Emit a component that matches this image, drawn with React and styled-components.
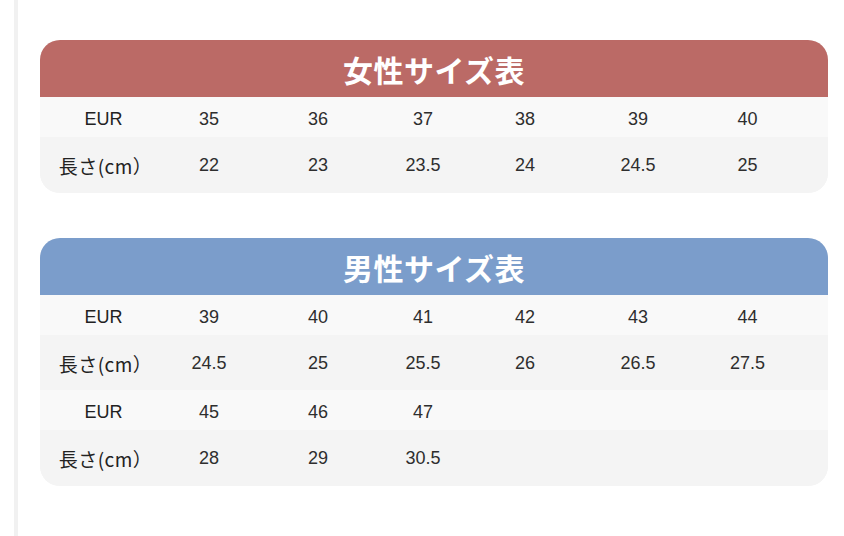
import styled, { createGlobalStyle } from "styled-components";

const GlobalStyle = createGlobalStyle`
    body {
        margin: 0;
        background: #ffffff;
        font-family: "Liberation Sans", "Noto Sans CJK JP", sans-serif;
    }
`;

// column widths measured from the reference, label column first
const COLS = "127px 84px 134px 76px 128px 98px 121px 1fr";

const Page = styled.div`
    margin-left: 14px;
    border-left: 4px solid #f1f1f1;
    min-height: 536px;
    box-sizing: border-box;
    padding: 40px 16px 0 22px;
    display: flex;
    flex-direction: column;
    gap: 45px;
`;

const Card = styled.div`
    width: 788px;
    border-radius: 20px;
    overflow: hidden;
    background: #f4f4f4;
    padding-bottom: 1px;
`;

const Header = styled.div`
    height: 57px;
    display: flex;
    align-items: center;
    justify-content: center;
    background: ${(props) => props.color};
    color: #ffffff;
    font-family: "Noto Sans CJK JP", sans-serif;
    font-weight: 700;
    font-size: 30px;
    letter-spacing: 0.5px;
`;

const Row = styled.div`
    display: grid;
    grid-template-columns: ${COLS};
    align-items: center;
    height: ${(props) => (props.kind === "eur" ? "40px" : "55px")};
    box-sizing: border-box;
    padding-top: ${(props) => (props.kind === "eur" ? "4px" : "2px")};
    background: ${(props) => (props.kind === "eur" ? "#f9f9f9" : "#f4f4f4")};
`;

const Cell = styled.div`
    text-align: center;
    font-size: 18px;
    color: #2e2e2e;
    white-space: nowrap;
`;

const Label = styled(Cell)`
    color: #222222;
    font-family: ${(props) => (props.cjk ? '"Noto Sans CJK JP", sans-serif' : "inherit")};
    font-size: ${(props) => (props.cjk ? "19px" : "18px")};
    letter-spacing: ${(props) => (props.cjk ? "0.5px" : "0")};
    padding-left: ${(props) => (props.cjk ? "4px" : "0")};
`;

const women = [
    { eur: ["35", "36", "37", "38", "39", "40"], len: ["22", "23", "23.5", "24", "24.5", "25"] },
];

const men = [
    { eur: ["39", "40", "41", "42", "43", "44"], len: ["24.5", "25", "25.5", "26", "26.5", "27.5"] },
    { eur: ["45", "46", "47"], len: ["28", "29", "30.5"] },
];

const SizeTable = ({ title, color, groups }) => (
    <Card>
        <Header color={color}>{title}</Header>
        {groups.map((g, i) => (
            <div key={i}>
                <Row kind="eur">
                    <Label>EUR</Label>
                    {g.eur.map((v) => (
                        <Cell key={v}>{v}</Cell>
                    ))}
                </Row>
                <Row kind="len">
                    <Label cjk>長さ(cm）</Label>
                    {g.len.map((v) => (
                        <Cell key={v}>{v}</Cell>
                    ))}
                </Row>
            </div>
        ))}
    </Card>
);

const App = () => {
    return (
        <>
            <GlobalStyle />
            <Page>
                <SizeTable title="女性サイズ表" color="#bb6a66" groups={women} />
                <SizeTable title="男性サイズ表" color="#7b9dcb" groups={men} />
            </Page>
        </>
    );
};

export default App;
